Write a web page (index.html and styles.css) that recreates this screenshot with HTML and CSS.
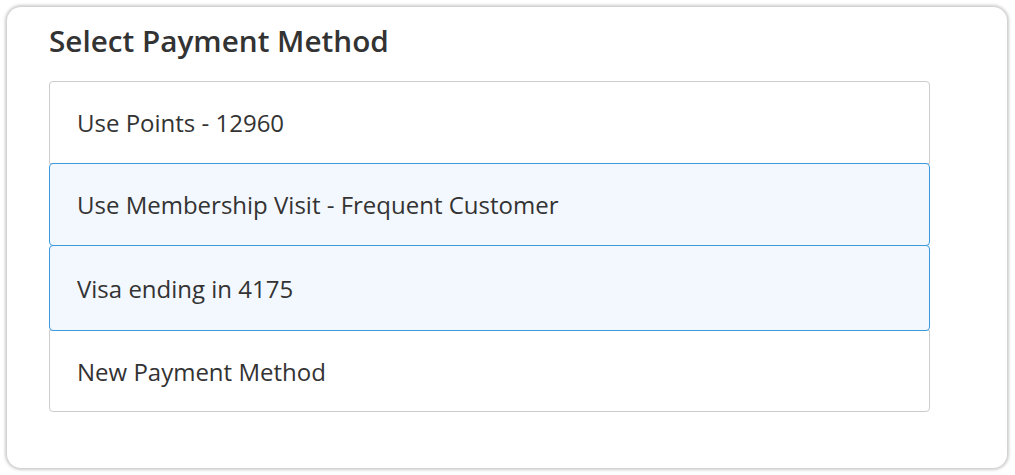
FILE: index.html
```html
<!DOCTYPE html>
<html lang="en">
<head>
  <meta charset="UTF-8" />
  <meta name="viewport" content="width=device-width, initial-scale=1.0" />
  <title>Select Payment Method</title>
  <link rel="stylesheet" href="styles.css">
</head>
<body>
  <div class="payment-card">
    <h2>Select Payment Method</h2>

    <!-- Payment options -->
    <div class="method-list">
      <div class="method">Use Points - 12960</div>
      <div class="method selected">Use Membership Visit - Frequent Customer</div>
      <div class="method selected tall">Visa ending in 4175</div>
      <div class="method">New Payment Method</div>
    </div>
  </div>
</body>
</html>
```

FILE: styles.css
```css
body {
  font-family: 'Open Sans', 'Lato', sans-serif;
  margin: 0;
  padding: 7px 8px 7px 7px;
  background-color: #fff;
  color: #333;
}
.payment-card {
  background-color: #fff;
  border-radius: 14px;
  box-shadow: 0 0 3px 2px rgba(0, 0, 0, 0.2);
  height: 461px;
  box-sizing: border-box;
  padding: 17px 77px 0 42px;
}
h2 {
  margin: 0 0 23px 0;
  font-size: 29.7px;
  font-weight: 600;
  color: #333;
  line-height: 34px;
}
.method-list {
  display: flex;
  flex-direction: column;
}
.method {
  height: 83px;
  box-sizing: border-box;
  display: flex;
  align-items: center;
  padding: 0 27px;
  font-size: 24px;
  color: #333;
  background-color: #fff;
  border: 1px solid #ccc;
  margin-top: -1px;
}
.method:first-child {
  margin-top: 0;
  border-radius: 4px 4px 0 0;
}
.method:last-child {
  border-radius: 0 0 4px 4px;
  height: 82px;
}
.method.selected {
  background-color: #f3f8fe;
  border-color: #3b99dc;
  border-radius: 4px;
  position: relative;
}
.method.tall {
  height: 86px;
}
```
